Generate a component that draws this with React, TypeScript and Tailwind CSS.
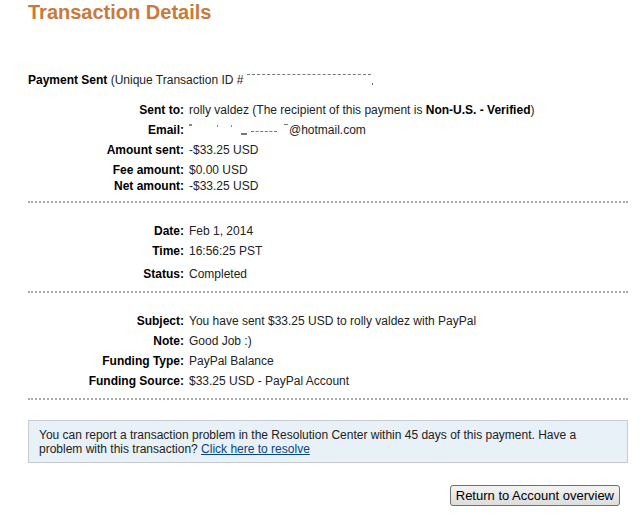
import * as React from "react"

const rowsA = [
    { label: "Sent to:", value: "sent" },
    { label: "Email:", value: "email" },
    { label: "Amount sent:", value: "-$33.25 USD" },
]

function Row({ label, children, className = "" }: { label: string; children: React.ReactNode; className?: string }) {
    return (
        <div className={`flex ${className}`}>
            <div className="w-[156px] shrink-0 text-right font-bold text-[#000] whitespace-nowrap">{label}</div>
            <div className="pl-[5px] text-[#222]">{children}</div>
        </div>
    )
}

function Divider() {
    return <div className="border-t-2 border-dotted border-[#aaaaaa]" />
}

export default function App() {
    return (
        <div className="min-h-[518px] w-[642px] bg-white pl-[28px] pr-[14px] text-[12px] leading-[14px] font-['Liberation_Sans',Arial,sans-serif]">
            <h1 className="text-[20px] leading-[24px] font-bold text-[#c97a3a]">Transaction Details</h1>

            <div className="mt-[49px] text-[#222]">
                <span className="font-bold text-black">Payment Sent</span> (Unique Transaction ID #{" "}
                <span className="relative inline-block w-[124px] h-[10px] align-top border-t border-dashed border-[#777] mt-[1px]">
                    <span className="absolute right-[-2px] top-[8px] h-[2px] w-[1px] bg-[#666]" />
                </span>
            </div>

            <div className="mt-[16px] flex flex-col gap-[6px]">
                {rowsA.map((r) => (
                    <Row key={r.label} label={r.label}>
                        {r.value === "sent" ? (
                            <>
                                rolly valdez (The recipient of this payment is{" "}
                                <span className="font-bold text-black">Non-U.S. - Verified</span>)
                            </>
                        ) : r.value === "email" ? (
                            <>
                                <span className="relative inline-block h-[10px] w-[100px]">
                                    <span className="absolute left-0 top-0 h-[2px] w-[3px] bg-[#888]" />
                                    <span className="absolute left-[28px] top-[1px] h-[2px] w-[1px] bg-[#888]" />
                                    <span className="absolute left-[42px] top-[1px] h-[2px] w-[1px] bg-[#888]" />
                                    <span className="absolute left-[52px] top-[9px] h-[2px] w-[6px] bg-[#777]" />
                                    <span className="absolute left-[62px] top-[7px] h-[1px] w-[26px] border-t border-dashed border-[#777]" />
                                    <span className="absolute left-[95px] top-0 h-[1px] w-[4px] bg-[#777]" />
                                </span>
                                @hotmail.com
                            </>
                        ) : (
                            r.value
                        )}
                    </Row>
                ))}
            </div>
            <div className="mt-[6px] flex flex-col gap-[2px]">
                <Row label="Fee amount:">$0.00 USD</Row>
                <Row label="Net amount:">-$33.25 USD</Row>
            </div>

            <div className="mt-[8px]">
                <Divider />
            </div>

            <div className="mt-[21px] flex flex-col">
                <Row label="Date:">Feb 1, 2014</Row>
                <Row label="Time:" className="mt-[6px]">16:56:25 PST</Row>
                <Row label="Status:" className="mt-[9px]">Completed</Row>
            </div>

            <div className="mt-[10px]">
                <Divider />
            </div>

            <div className="mt-[21px] flex flex-col gap-[6px]">
                <Row label="Subject:">You have sent $33.25 USD to rolly valdez with PayPal</Row>
                <Row label="Note:">Good Job :)</Row>
                <Row label="Funding Type:">PayPal Balance</Row>
                <Row label="Funding Source:">$33.25 USD - PayPal Account</Row>
            </div>

            <div className="mt-[10px]">
                <Divider />
            </div>

            <div className="mt-[20px] border border-[#c8ccd0] bg-[#e8f0f8] px-[10px] pt-[7px] pb-[6px] text-[#222]">
                <p>
                    You can report a transaction problem in the Resolution Center within 45 days of this payment. Have a
                    problem with this transaction?{" "}
                    <a href="#" className="text-[#084482] underline">
                        Click here to resolve
                    </a>
                </p>
            </div>

            <div className="mt-[22px] flex justify-end pr-[8px]">
                <button className="h-[21px] rounded-[3px] border border-[#707070] bg-gradient-to-b from-[#f4f4f4] to-[#dcdcdc] px-[5px] text-[13px] leading-[17px] text-black">
                    Return to Account overview
                </button>
            </div>
        </div>
    )
}
